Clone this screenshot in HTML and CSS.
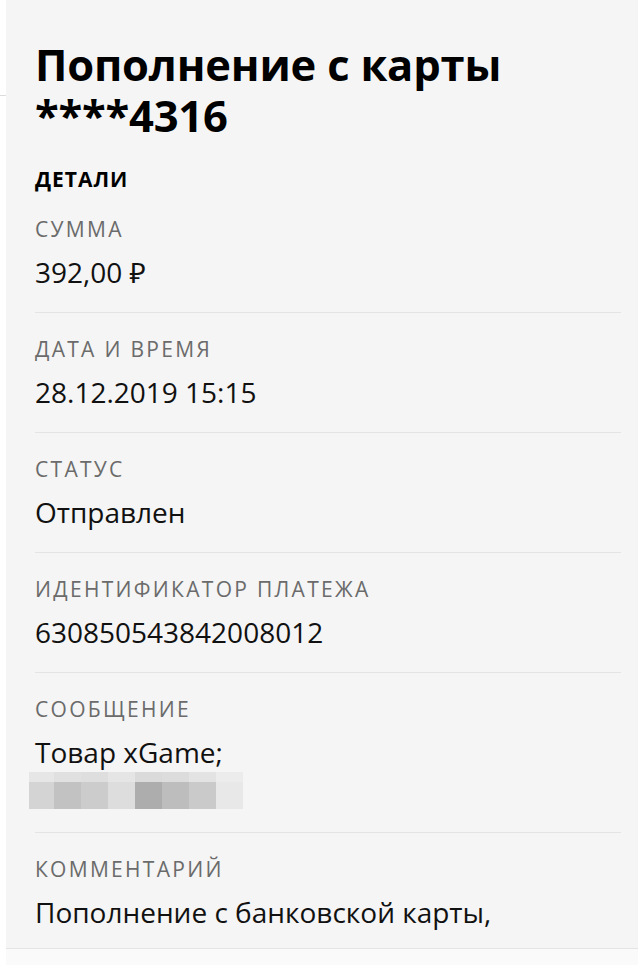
FILE: index.html
```html
<!DOCTYPE html>
<html lang="ru">
<head>
<meta charset="utf-8">
<title>Пополнение с карты</title>
<link rel="stylesheet" href="styles.css">
</head>
<body>
<div class="page">
  <div class="side"><div class="side-line"></div></div>
  <div class="panel">
    <main class="content">
      <h1 class="title">Пополнение с карты ****4316</h1>
      <div class="section-title">ДЕТАЛИ</div>
      <div class="row">
        <div class="label">СУММА</div>
        <div class="value">392,00 ₽</div>
      </div>
      <div class="row">
        <div class="label">ДАТА И ВРЕМЯ</div>
        <div class="value">28.12.2019 15:15</div>
      </div>
      <div class="row">
        <div class="label">СТАТУС</div>
        <div class="value">Отправлен</div>
      </div>
      <div class="row">
        <div class="label">ИДЕНТИФИКАТОР ПЛАТЕЖА</div>
        <div class="value">630850543842008012</div>
      </div>
      <div class="row">
        <div class="label">СООБЩЕНИЕ</div>
        <div class="value">Товар xGame;</div>
        <div class="blur">
          <span></span><span></span><span></span><span></span><span></span><span></span><span></span><span></span>
          <span></span><span></span><span></span><span></span><span></span><span></span><span></span><span></span>
        </div>
      </div>
      <div class="row row-last">
        <div class="label">КОММЕНТАРИЙ</div>
        <div class="value">Пополнение с банковской карты,</div>
      </div>
    </main>
    <div class="footer"></div>
  </div>
</div>
</body>
</html>
```

FILE: styles.css
```css
* { box-sizing: border-box; }
html, body { margin: 0; padding: 0; }
body {
  background: #ffffff;
  font-family: "Open Sans", "Noto Sans", "DejaVu Sans", sans-serif;
  color: #111111;
  overflow: hidden;
}
.page {
  display: flex;
  width: 638px;
  height: 965px;
}
.side {
  width: 6px;
  flex: none;
  background: #ffffff;
}
.side-line {
  margin-top: 95px;
  height: 1px;
  background: #dcdcdc;
}
.panel {
  flex: 1;
  display: flex;
  flex-direction: column;
  background: #f5f5f5;
}
.content {
  flex: 1;
  padding: 39px 17px 0 29px;
  overflow: hidden;
}
.title {
  margin: 0;
  font-size: 43.5px;
  line-height: 51px;
  font-weight: 700;
  color: #000;
  letter-spacing: -0.2px;
}
.section-title {
  margin-top: 26px;
  margin-bottom: 2px;
  font-size: 21px;
  line-height: 24px;
  font-weight: 700;
  color: #000;
  letter-spacing: 1px;
}
.row {
  padding: 24px 0 23px;
  border-bottom: 1px solid #e4e4e4;
}
.row-last {
  border-bottom: none;
  padding-bottom: 0;
}
.label {
  font-size: 21px;
  line-height: 24px;
  color: #6b6b6b;
  letter-spacing: 2.3px;
}
.value {
  margin-top: 14px;
  font-size: 28px;
  line-height: 34px;
  color: #111;
}
.blur {
  margin-top: 3px;
  margin-left: -6px;
  width: 212px;
  height: 37px;
  display: grid;
  grid-template-columns: 25px repeat(7, 27px);
  grid-template-rows: 10px 27px;
}
.blur span:nth-child(1) { background: #e6e6e6; }
.blur span:nth-child(2) { background: #e0e0e0; }
.blur span:nth-child(3) { background: #dedede; }
.blur span:nth-child(4) { background: #e5e5e5; }
.blur span:nth-child(5) { background: #dadada; }
.blur span:nth-child(6) { background: #dcdcdc; }
.blur span:nth-child(7) { background: #e3e3e3; }
.blur span:nth-child(8) { background: #ececec; }
.blur span:nth-child(9) { background: #d4d4d4; }
.blur span:nth-child(10) { background: #c2c2c2; }
.blur span:nth-child(11) { background: #cccccc; }
.blur span:nth-child(12) { background: #dddddd; }
.blur span:nth-child(13) { background: #adadad; }
.blur span:nth-child(14) { background: #bdbdbd; }
.blur span:nth-child(15) { background: #cacaca; }
.blur span:nth-child(16) { background: #e8e8e8; }
.footer {
  flex: none;
  height: 17px;
  background: #fafafa;
  border-top: 1px solid #e4e4e4;
}
```
